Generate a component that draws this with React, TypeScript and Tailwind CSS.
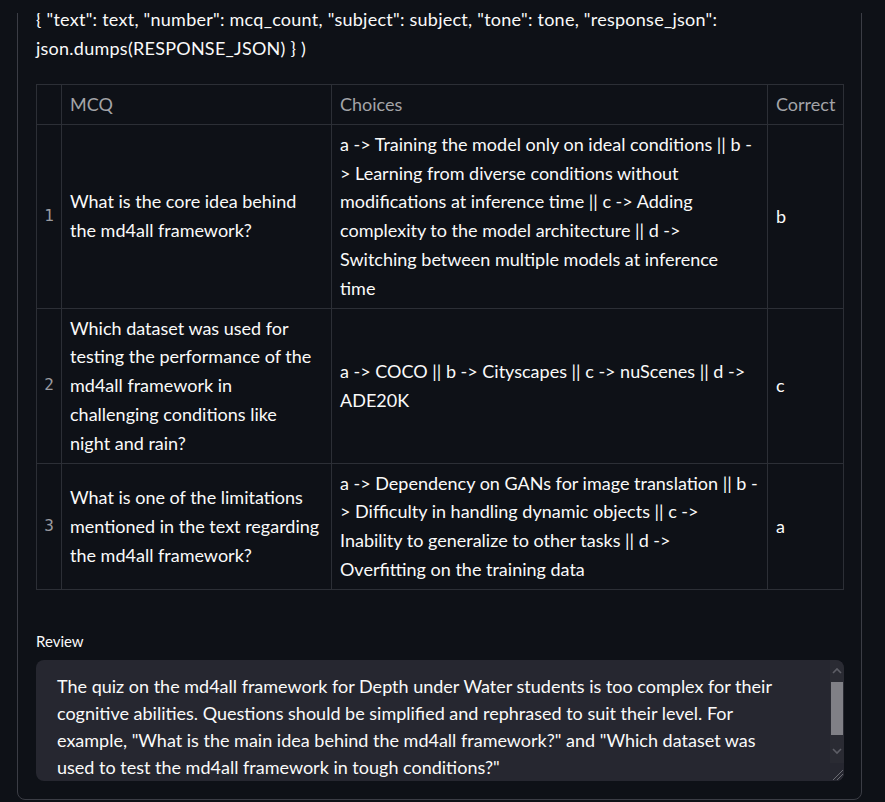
import React from 'react';

interface QuizRow {
    index: number;
    question: string[];
    choices: string[];
    correct: string;
}

const rows: QuizRow[] = [
    {
        index: 1,
        question: ['What is the core idea behind', 'the md4all framework?'],
        choices: [
            'a -> Training the model only on ideal conditions || b -',
            '> Learning from diverse conditions without',
            'modifications at inference time || c -> Adding',
            'complexity to the model architecture || d ->',
            'Switching between multiple models at inference',
            'time',
        ],
        correct: 'b',
    },
    {
        index: 2,
        question: [
            'Which dataset was used for',
            'testing the performance of the',
            'md4all framework in',
            'challenging conditions like',
            'night and rain?',
        ],
        choices: ['a -> COCO || b -> Cityscapes || c -> nuScenes || d ->', 'ADE20K'],
        correct: 'c',
    },
    {
        index: 3,
        question: ['What is one of the limitations', 'mentioned in the text regarding', 'the md4all framework?'],
        choices: [
            'a -> Dependency on GANs for image translation || b -',
            '> Difficulty in handling dynamic objects || c ->',
            'Inability to generalize to other tasks || d ->',
            'Overfitting on the training data',
        ],
        correct: 'a',
    },
];

const reviewText = [
    'The quiz on the md4all framework for Depth under Water students is too complex for their',
    'cognitive abilities. Questions should be simplified and rephrased to suit their level. For',
    'example, "What is the main idea behind the md4all framework?" and "Which dataset was',
    'used to test the md4all framework in tough conditions?"',
];

// keeps the wrapping of the screenshot
const Lines = ({ lines }: { lines: string[] }) => (
    <>
        {lines.map((l, i) => (
            <span key={i} className="block whitespace-nowrap">
                {l}
            </span>
        ))}
    </>
);

const ScrollBar = () => (
    <div className="flex w-[14px] flex-col bg-[#2a2b33] rounded-tr-lg">
        <div className="flex h-[22px] items-center justify-center">
            <svg width="10" height="7" viewBox="0 0 10 7" fill="none" stroke="#5d5e66" strokeWidth="1.6">
                <path d="M1 6 L5 2 L9 6" />
            </svg>
        </div>
        <div className="mx-[1px] h-[53px] bg-[#808086]" />
        <div className="flex-1" />
        <div className="flex h-[22px] items-center justify-center">
            <svg width="10" height="7" viewBox="0 0 10 7" fill="none" stroke="#5d5e66" strokeWidth="1.6">
                <path d="M1 1 L5 5 L9 1" />
            </svg>
        </div>
        <div className="flex h-[18px] items-end justify-end bg-[#262730] rounded-br-lg">
            <svg width="14" height="14" viewBox="0 0 14 14" stroke="#6b6c73" strokeWidth="1">
                <path d="M13 3 L3 13 M13 7 L7 13 M13 11 L11 13" />
            </svg>
        </div>
    </div>
);

export default function App() {
    return (
        <div className="relative h-[802px] overflow-hidden bg-[#0e1117] text-[#fafafa] font-['Lato',sans-serif]">
            <div className="absolute left-0 top-0 z-10 h-[13px] w-full bg-[#0e1117]" />

            <div className="ml-[17px] mt-[-12px] w-[845px] rounded-lg border border-[#3b3d45] pl-[18px] pr-[17px] pt-[16px] pb-[18px]">
                <p className="text-[18px] leading-[29px] tracking-[0.25px]">
                    <span className="block whitespace-nowrap">
                        {'{ "text": text, "number": mcq_count, "subject": subject, "tone": tone, "response_json":'}
                    </span>
                    <span className="block whitespace-nowrap">{'json.dumps(RESPONSE_JSON) } )'}</span>
                </p>

                <table className="mt-[21px] w-[807px] table-fixed border-collapse text-[18px] leading-[28.8px]">
                    <colgroup>
                        <col className="w-[25px]" />
                        <col className="w-[270px]" />
                        <col className="w-[436px]" />
                        <col className="w-[76px]" />
                    </colgroup>
                    <thead>
                        <tr className="text-[#a3a4a8]">
                            <th className="border border-[#2c2f36] py-[5px]" />
                            <th className="border border-[#2c2f36] px-2 py-[5px] text-left font-normal">MCQ</th>
                            <th className="border border-[#2c2f36] px-2 py-[5px] text-left font-normal">Choices</th>
                            <th className="border border-[#2c2f36] px-2 py-[5px] text-left font-normal">Correct</th>
                        </tr>
                    </thead>
                    <tbody>
                        {rows.map((row) => (
                            <tr key={row.index}>
                                <th className="border border-[#2c2f36] text-center font-['DejaVu_Sans_Mono',monospace] text-[16px] font-normal text-[#9a9ba0]">
                                    {row.index}
                                </th>
                                <td className="border border-[#2c2f36] px-2 py-[5px] align-middle">
                                    <Lines lines={row.question} />
                                </td>
                                <td className="border border-[#2c2f36] px-2 py-[5px] align-middle">
                                    <Lines lines={row.choices} />
                                </td>
                                <td className="border border-[#2c2f36] px-2 py-[5px] align-middle">{row.correct}</td>
                            </tr>
                        ))}
                    </tbody>
                </table>

                <div className="mt-[39px] text-[15px] leading-[24px]">Review</div>
                <div className="mt-[7px] flex h-[121px] overflow-hidden rounded-lg bg-[#262730]">
                    <div className="flex-1 overflow-hidden pl-[21px] pt-[13px] text-[18px] leading-[27px]">
                        <Lines lines={reviewText} />
                    </div>
                    <ScrollBar />
                </div>
            </div>
        </div>
    );
}
